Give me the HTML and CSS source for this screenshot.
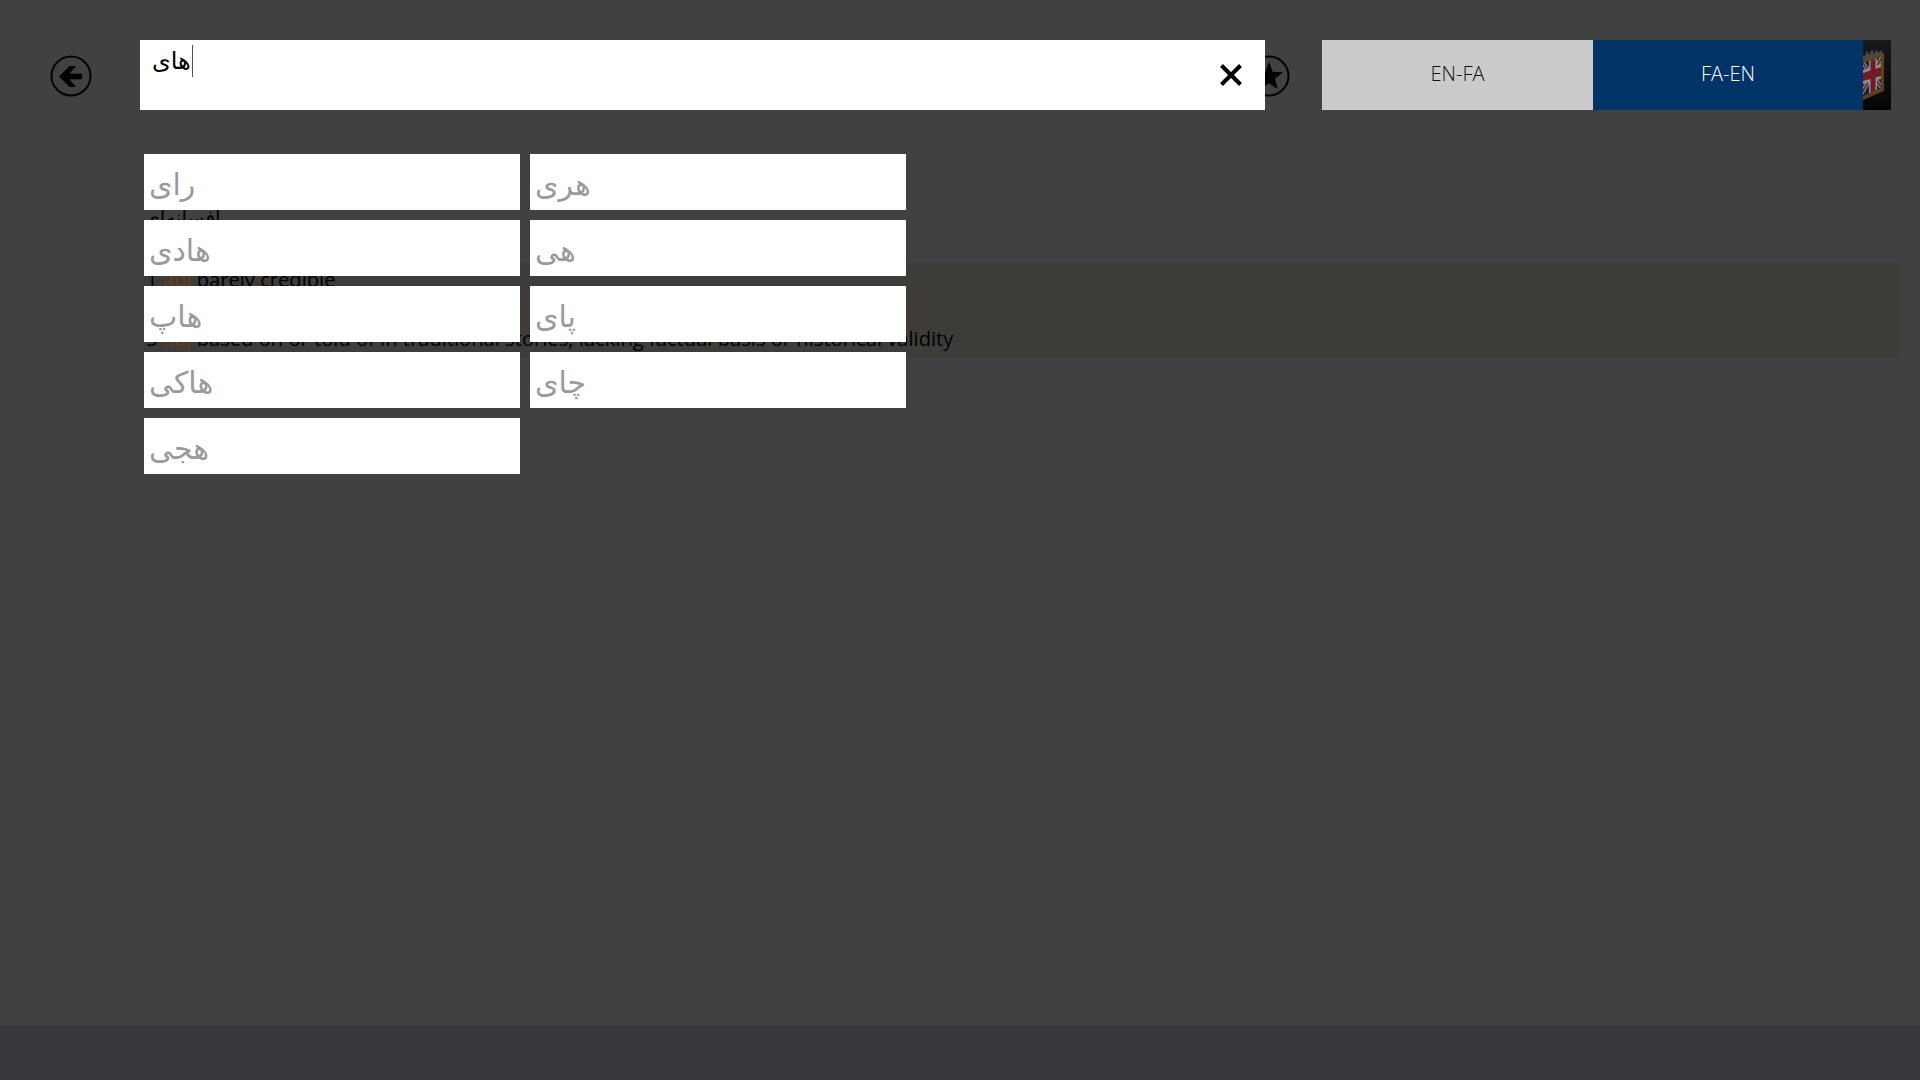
FILE: index.html
```html
<!DOCTYPE html>
<html lang="en">
<head>
<meta charset="utf-8">
<title>Dictionary</title>
<link rel="stylesheet" href="styles.css">
</head>
<body>
<div class="app">
  <main class="main">
    <header class="topbar">
      <button class="round back" aria-label="Back">
        <svg viewBox="0 0 42 42" width="42" height="42"><circle cx="21" cy="21" r="19.5" fill="none" stroke="#000" stroke-width="2"/><path d="M32 18.700H19.500L26 11h-6.500L9 21.500 19.500 32H26l-6.500-7.700H32z" fill="#000"/></svg>
      </button>
      <div class="searchwrap">
        <div class="search">
          <span class="query" dir="rtl">های</span><span class="caret"></span>
          <svg class="clear" viewBox="0 0 24 24" width="24" height="24"><path d="M2.500 2.500l19 19M21.500 2.500l-19 19" stroke="#000" stroke-width="4" fill="none"/></svg>
        </div>
        <svg class="fav" viewBox="0 0 42 42" width="42" height="42"><circle cx="21" cy="21" r="19.500" fill="none" stroke="#000" stroke-width="2"/><path d="M21 6.500l3.600 10.300 10.400.4-8 6.600 2.700 10.200-8.700-5.700-8.700 5.700 2.700-10.200-8-6.600 10.400-.4z" fill="#000"/></svg>
      </div>
      <div class="tabs">
        <div class="tab tab-off">EN-FA</div>
        <div class="tab tab-on">FA-EN</div>
        <div class="flagbox">
          <svg class="flag" viewBox="0 0 28 70" width="28" height="70">
            <defs><clipPath id="flagclip"><path d="M0 23l18-6v31L0 56z"/></clipPath></defs>
            <path d="M0 20V15l2 1 2-6 2 5 3-6 2 5 3-5 1 4 3-3 2 3v6z" fill="#5e5e5e"/>
            <path d="M0 20l21-7v38L0 60z" fill="#7d5a1e"/>
            <g clip-path="url(#flagclip)">
              <rect width="28" height="70" fill="#1b2a5c"/>
              <path d="M-4 18l26 34M22 12L-4 58" stroke="#b9b9b9" stroke-width="4" fill="none"/>
              <path d="M-4 18l26 34M22 12L-4 58" stroke="#8f1f2c" stroke-width="1.500" fill="none"/>
              <path d="M6 10h8v50H6z" fill="#c4c4c4"/>
              <path d="M0 30l18-6v15L0 44z" fill="#c4c4c4"/>
              <path d="M7.500 10h5v50h-5z" fill="#982230"/>
              <path d="M0 33l18-6v9L0 41z" fill="#982230"/>
            </g>
          </svg>
        </div>
      </div>
    </header>
    <section class="behind">
      <div class="b-num">1</div>
      <div class="b-pos">a</div>
      <div class="b-word" dir="rtl">افسانه‌ای</div>
      <div class="b-band">
        <p class="b-line b-line-first"><span>1</span> <em>adj</em> barely credible</p>
        <p class="b-line b-line-third"><span>3</span> <em>adj</em> based on or told of in traditional stories; lacking factual basis or historical validity</p>
      </div>
    </section>
    <div class="suggest">
      <div class="sug" dir="rtl"><bdi>رای</bdi></div>
      <div class="sug" dir="rtl"><bdi>هری</bdi></div>
      <div class="sug" dir="rtl"><bdi>هادی</bdi></div>
      <div class="sug" dir="rtl"><bdi>هی</bdi></div>
      <div class="sug" dir="rtl"><bdi>هاپ</bdi></div>
      <div class="sug" dir="rtl"><bdi>پای</bdi></div>
      <div class="sug" dir="rtl"><bdi>هاکی</bdi></div>
      <div class="sug" dir="rtl"><bdi>چای</bdi></div>
      <div class="sug" dir="rtl"><bdi>هجی</bdi></div>
    </div>
  </main>
  <footer class="appbar"></footer>
</div>
</body>
</html>
```
FILE: styles.css
```css
* { box-sizing: border-box; }
html, body { margin: 0; height: 100%; }
body { background: #414141; font-family: "Open Sans", "DejaVu Sans", sans-serif; color: #000; overflow: hidden; }
.app { height: 1080px; display: flex; flex-direction: column; }
.main { flex: 1; position: relative; padding-top: 40px; }
.appbar { height: 55px; background: #37383c; }
.topbar { display: flex; height: 70px; }
.round { width: 42px; height: 42px; margin: 15px 48px 0 50px; padding: 0; border: 0; background: none; }
.round svg { display: block; }
.searchwrap { width: 1125px; position: relative; margin-right: 57px; }
.search { height: 70px; width: 1125px; background: #fff; position: relative; z-index: 1; display: flex; align-items: flex-start; padding: 5px 0 0 12px; }
.query { font-family: "DejaVu Sans", sans-serif; font-size: 24px; line-height: 32px; }
.caret { width: 1px; height: 32px; background: #555; margin: 0 0 0 1px; }
.clear { position: absolute; right: 22px; top: 23px; }
.fav { position: absolute; left: 1108px; top: 15px; }
.tabs { display: flex; width: 569px; height: 70px; }
.tab { width: 271px; line-height: 68px; text-align: center; font-size: 20px; font-weight: 300; }
.tab-off { background: #cbcbcb; color: #111; }
.tab-on { background: #003366; color: #fff; width: 270px; }
.flagbox { width: 28px; height: 70px; background: linear-gradient(#17181a, #050505); overflow: hidden; }
.flag { display: block; opacity: .7; }
.behind { position: relative; height: 0; font-size: 20.16px; }
.b-num { position: absolute; left: 142px; top: 40px; color: #1a2440; }
.b-pos { position: absolute; left: 142px; top: 70px; color: #6a3c1c; }
.b-word { position: absolute; left: 144px; top: 96px; font-family: "DejaVu Sans", sans-serif; font-size: 20px; }
.b-band { position: absolute; left: 144px; top: 153px; width: 1756px; height: 94px; background: #3d3c38; }
.b-line { margin: 0; position: absolute; left: 2px; white-space: nowrap; line-height: 26px; }
.b-line em { font-style: normal; color: #6a3c1c; }
.b-line-first { top: 3px; }
.b-line-third { top: 62px; }
.suggest { position: absolute; left: 144px; top: 154px; width: 762px; display: grid; grid-template-columns: 376px 376px; grid-auto-rows: 56px; gap: 10px; }
.sug { background: #fff; color: #9a9a9a; font-family: "DejaVu Sans", sans-serif; font-size: 30px; line-height: 56px; direction: ltr; padding: 3px 0 0 5px; text-align: left; overflow: hidden; }
```
